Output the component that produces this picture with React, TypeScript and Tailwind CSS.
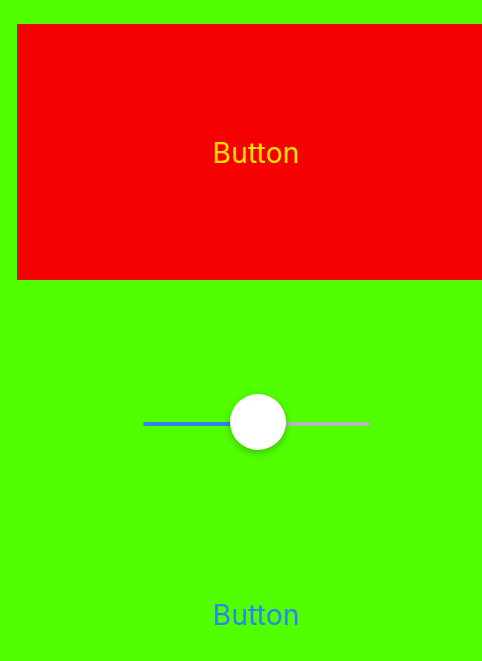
import { useState } from "react";

// 两个按钮 + 中间的滑块
export default function App() {
	const [value] = useState(0.5);
	const trackWidth = 227;
	const thumbSize = 56;

	return (
		<div
			className="w-full h-[661px] overflow-hidden bg-[#52ff00]"
			style={{ fontFamily: "Inter, 'Noto Sans', sans-serif" }}
		>
			<div className="ml-[17px] w-[478px] flex flex-col">
				{/* 红色大按钮 */}
				<button
					type="button"
					className="mt-[24px] w-full h-[256px] shrink-0 pt-[2px] bg-[#f50000] text-[#ffe100] text-[28px] tracking-[0.2px] flex items-center justify-center"
				>
					Button
				</button>

				{/* 滑块 */}
				<div className="mt-[114px] flex justify-center pl-px">
					<div className="relative h-[56px]" style={{ width: trackWidth }}>
						<div className="absolute left-0 right-0 top-[28px] h-[4px] rounded-full bg-[#b7b7b7]" />
						<div
							className="absolute left-0 top-[28px] h-[4px] rounded-full bg-[#2f80f0]"
							style={{ width: trackWidth * value }}
						/>
						<div
							className="absolute top-0 rounded-full bg-white shadow-[0_3px_8px_rgba(0,0,0,0.25)]"
							style={{
								width: thumbSize,
								height: thumbSize,
								left: trackWidth * value - thumbSize / 2 + 1,
							}}
						/>
					</div>
				</div>

				{/* 底部文字按钮 */}
				<button
					type="button"
					className="mt-[149px] h-[32px] flex items-center justify-center text-[28px] tracking-[0.2px] text-[#2f86e6]"
				>
					Button
				</button>
			</div>
		</div>
	);
}
